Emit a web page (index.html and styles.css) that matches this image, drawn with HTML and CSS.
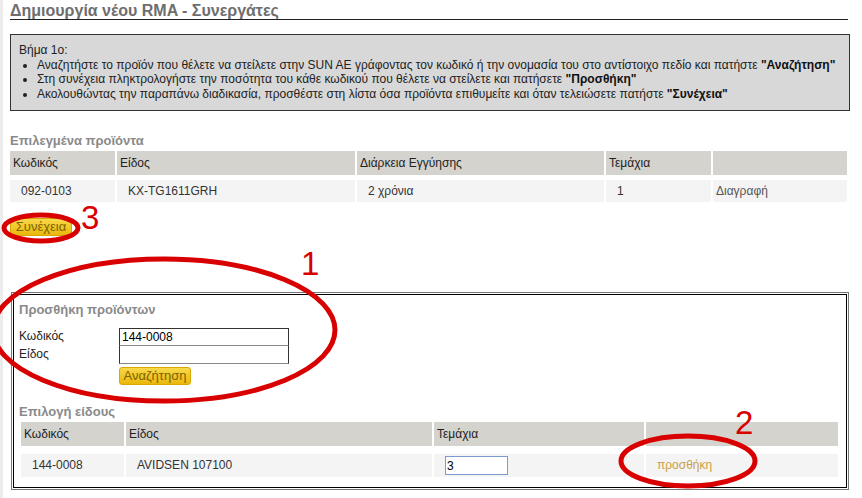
FILE: index.html
```html
<!DOCTYPE html>
<html>
<head>
  <meta charset="utf-8">
  <link rel="stylesheet" href="styles.css">
</head>
<body>
  <div class="page">
    <h1 class="page-title">Δημιουργία νέου RMA - Συνεργάτες</h1>

    <div class="instructions">
      <div class="step">Βήμα 1ο:</div>
      <ul>
        <li>Αναζητήστε το προϊόν που θέλετε να στείλετε στην SUN AE γράφοντας τον κωδικό ή την ονομασία του στο αντίστοιχο πεδίο και πατήστε <b>"Αναζήτηση"</b></li>
        <li>Στη συνέχεια πληκτρολογήστε την ποσότητα του κάθε κωδικού που θέλετε να στείλετε και πατήσετε <b>"Προσθήκη"</b></li>
        <li>Ακολουθώντας την παραπάνω διαδικασία, προσθέστε στη λίστα όσα προϊόντα επιθυμείτε και όταν τελειώσετε πατήστε <b>"Συνέχεια"</b></li>
      </ul>
    </div>

    <h3 class="section-title">Επιλεγμένα προϊόντα</h3>
    <div class="grid selected-grid">
      <div class="th">Κωδικός</div>
      <div class="th">Είδος</div>
      <div class="th">Διάρκεια Εγγύησης</div>
      <div class="th">Τεμάχια</div>
      <div class="th"></div>
      <div class="td">092-0103</div>
      <div class="td">KX-TG1611GRH</div>
      <div class="td">2 χρόνια</div>
      <div class="td">1</div>
      <div class="td link-gray">Διαγραφή</div>
    </div>

    <button class="yellow-btn continue-btn">Συνέχεια</button>

    <div class="add-box">
      <div class="add-box-inner">
        <h3 class="section-title">Προσθήκη προϊόντων</h3>
        <div class="search-form">
          <label>Κωδικός</label>
          <input type="text" class="search-input" value="144-0008">
          <label>Είδος</label>
          <input type="text" class="search-input second">
          <span></span>
          <button class="yellow-btn search-btn">Αναζήτηση</button>
        </div>

        <h3 class="section-title pick-title">Επιλογή είδους</h3>
        <div class="grid pick-grid">
          <div class="th">Κωδικός</div>
          <div class="th">Είδος</div>
          <div class="th">Τεμάχια</div>
          <div class="th"></div>
          <div class="td">144-0008</div>
          <div class="td">AVIDSEN 107100</div>
          <div class="td"><input type="text" class="qty-input" value="3"></div>
          <div class="td add-link">προσθήκη</div>
        </div>
      </div>
    </div>
  </div>

  <!-- red annotations drawn over the screenshot -->
  <svg class="marks" width="862" height="498" viewBox="0 0 862 498">
    <ellipse cx="41" cy="228" rx="37" ry="13" />
    <ellipse cx="164" cy="330" rx="171" ry="71" />
    <ellipse cx="688" cy="461" rx="67" ry="25" />
    <text x="81" y="229">3</text>
    <text x="301" y="275">1</text>
    <text x="735" y="434">2</text>
  </svg>
</body>
</html>
```

FILE: styles.css
```css
body {
  margin: 0;
  font-family: "Liberation Sans", Arial, sans-serif;
  font-size: 12px;
  color: #222;
  background: #fff;
  border-left: 3px solid #ececec;
  min-height: 498px;
  box-sizing: border-box;
}

.page {
  width: 840px;
  padding: 0 0 0 7px;
  position: relative;
}

.page-title {
  margin: 0;
  padding-top: 2px;
  font-size: 16px;
  font-weight: bold;
  color: #6e6e6e;
  line-height: 17px;
  border-bottom: 1px solid #222;
  width: 838px;
}

.instructions {
  margin-top: 14px;
  border: 1px solid #333;
  background: #d8d8d8;
  padding: 8px 10px 9px 8px;
  line-height: 14.5px;
  color: #222;
}

.instructions ul {
  margin: 0;
  padding-left: 18px;
}

.instructions b {
  color: #111;
}

.section-title {
  margin: 0;
  font-size: 13px;
  font-weight: bold;
  color: #8a8a8a;
  line-height: 16px;
}

.page > .section-title {
  margin-top: 22px;
}

/* tables as grids */
.grid {
  display: grid;
  column-gap: 2px;
}

.selected-grid {
  grid-template-columns: 105px 238px 247px 105px 134px;
  row-gap: 5px;
  margin-top: 2px;
}

.th {
  background: #d5d3ce;
  height: 24px;
  line-height: 24px;
  padding-left: 3px;
  color: #222;
}

.td {
  background: #f4f4f4;
  height: 22px;
  line-height: 22px;
  padding-left: 11px;
  color: #333;
}

.link-gray {
  padding-left: 3px;
  color: #555;
}

.yellow-btn {
  font-family: "Liberation Sans", Arial, sans-serif;
  font-size: 13px;
  color: #7c6200;
  background: linear-gradient(#f8d84a, #e9b80c);
  border: 1px solid #d9a800;
  border-radius: 3px;
  padding: 0 3px;
  height: 18px;
  line-height: 16px;
  display: block;
}

.continue-btn {
  margin-top: 16px;
  width: 62px;
}

/* add products box, double border */
.add-box {
  margin-top: 56px;
  margin-left: 1px;
  border: 1px solid #777;
  padding: 1px;
  width: 834px;
}

.add-box-inner {
  border: 1px solid #000;
  padding: 7px 6px 8px 5px;
  height: 177px;
}

.search-form {
  display: grid;
  grid-template-columns: 100px 170px;
  margin-top: 10px;
}

.search-form label {
  line-height: 17px;
  color: #222;
}

.search-input {
  width: 170px;
  height: 18px;
  box-sizing: border-box;
  border: 1px solid #333;
  border-bottom-color: #888;
  padding: 0 2px;
  font-family: "Liberation Sans", Arial, sans-serif;
  font-size: 12px;
  color: #000;
}

.search-input.second {
  border-top: none;
}

.search-btn {
  margin-top: 3px;
  width: 72px;
}

.pick-title {
  margin-top: 19px;
}

.pick-grid {
  grid-template-columns: 103px 306px 210px 192px;
  row-gap: 8px;
  margin-top: 2px;
  margin-left: 2px;
}

.pick-grid .td {
  height: 23px;
  line-height: 23px;
}

.qty-input {
  width: 63px;
  height: 19px;
  box-sizing: border-box;
  border: 1px solid #7a9ad0;
  padding: 0 1px;
  font-family: "Liberation Sans", Arial, sans-serif;
  font-size: 12px;
  vertical-align: middle;
}

.add-link {
  color: #c8a040;
}

.marks {
  position: absolute;
  left: 0;
  top: 0;
  pointer-events: none;
}

.marks ellipse {
  fill: none;
  stroke: #d80000;
  stroke-width: 5;
}

.marks text {
  font-family: "Liberation Sans", Arial, sans-serif;
  font-size: 33px;
  fill: #d80000;
}
```
